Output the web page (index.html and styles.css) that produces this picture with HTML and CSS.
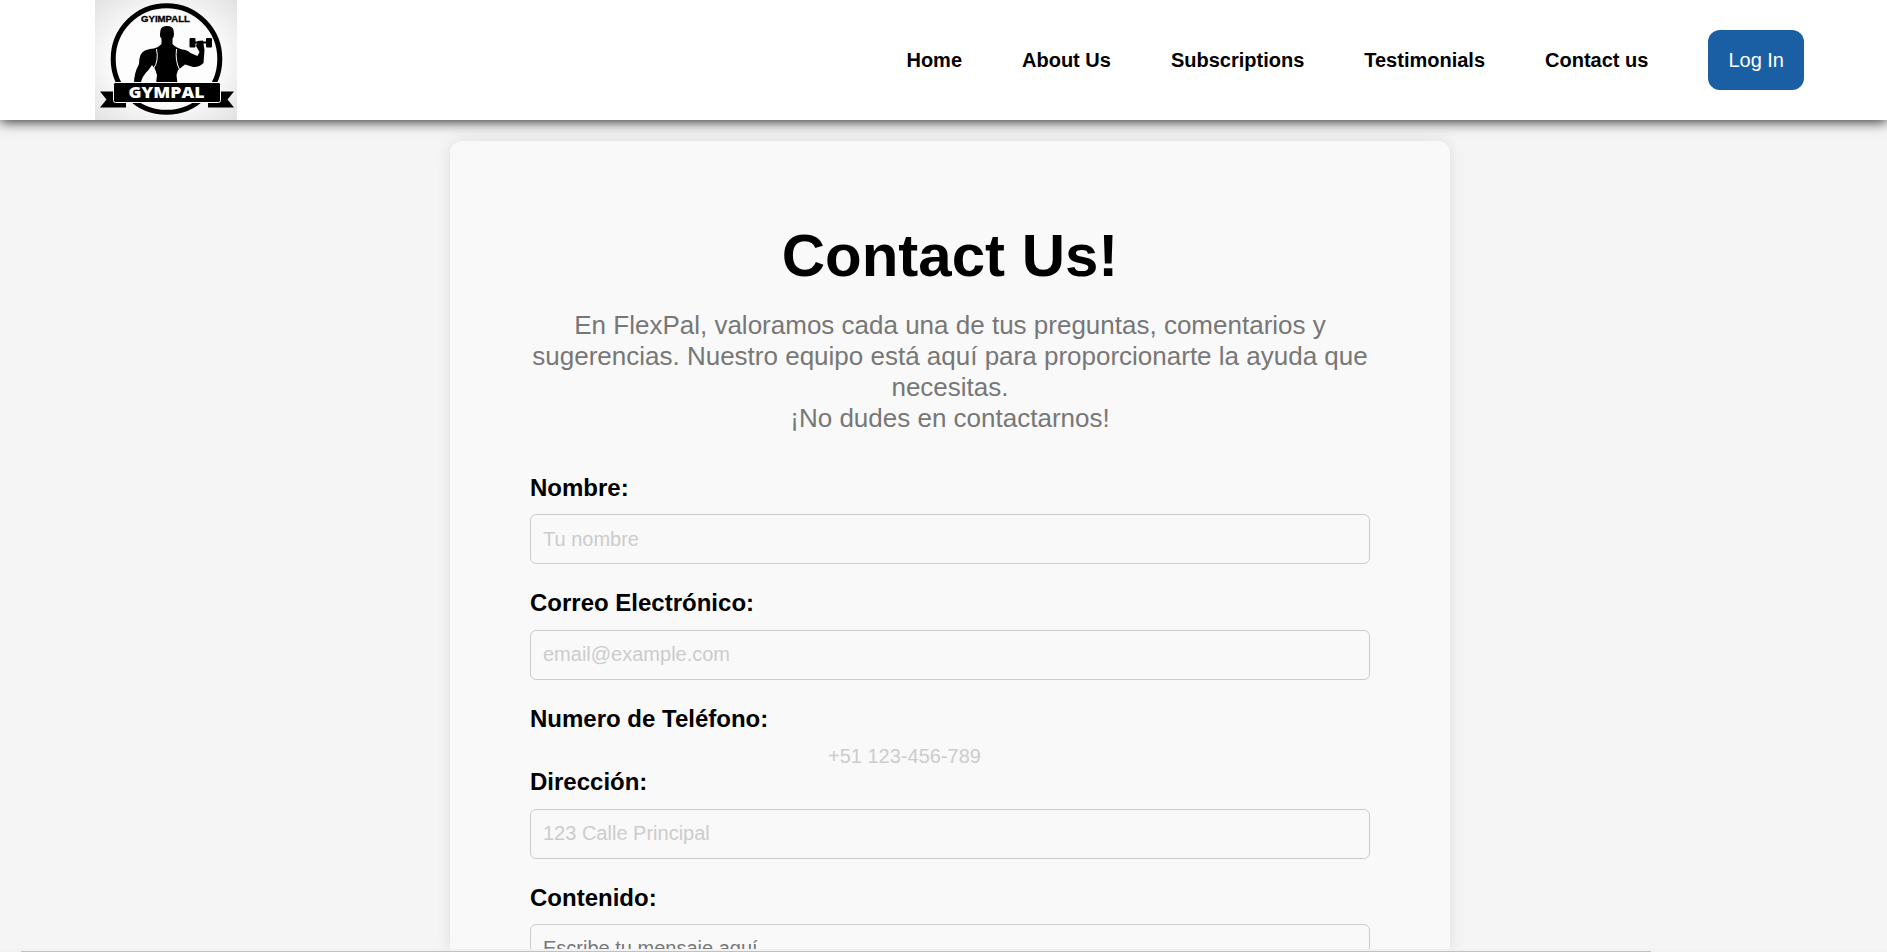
FILE: index.html
```html
<!DOCTYPE html>
<html lang="es">
<head>
<meta charset="utf-8">
<title>Contact Us</title>
<link rel="stylesheet" href="styles.css">
</head>
<body>
<header class="header">
  <svg class="logo" viewBox="0 0 142 120" role="img" aria-label="Gympal">
    <defs>
      <radialGradient id="paper" cx="50%" cy="50%" r="70%">
        <stop offset="0.5" stop-color="#fdfdfd"/>
        <stop offset="1" stop-color="#e2e2e2"/>
      </radialGradient>
    </defs>
    <rect width="142" height="120" fill="url(#paper)"/>
    <circle cx="71.5" cy="59" r="53.300" fill="none" stroke="#000" stroke-width="5"/>
    <text class="logo-arc" x="70.500" y="21.800" text-anchor="middle" textLength="49" lengthAdjust="spacingAndGlyphs">GYIMPALL</text>
    <path d="M66.500 44V38.500Q64.500 37 65 34L65.500 30Q66.500 26 72 26Q77.500 26 78.500 30L79 34Q79 37 77.500 38.500V44Q80 47 87 49.500Q92 49.500 95.500 53L102.500 56L104.500 52L101 46L102.500 41L108 40.500L109.500 50L108.500 63Q104 67.500 98 67L90 64.500L83 70L81.500 75L82.500 84H61L62 75L60 69L57 65L53.500 70Q47 76 45.500 84H39Q39 73 44 64Q44 53 50 50.500Q55 48.500 59 48.500Q64 47 66.500 44Z"/>
    <rect x="94.500" y="38" width="6" height="9.500" rx="1"/>
    <rect x="111" y="38" width="6" height="9.500" rx="1"/>
    <path d="M100 42.500H111" stroke="#000" stroke-width="2"/>
    <path d="M61.500 49Q64 61 58.500 68.500M81.500 49Q80 61 84.500 69.500" fill="none" stroke="#fff" stroke-width="1"/>
    <path d="M5 91.500H21V103H31V107.500H5L11.500 99.500ZM139 91.500H123V103H113V107.500H139L132.500 99.500Z"/>
    <rect x="18.500" y="82.500" width="107" height="20" rx="2" stroke="#fff"/>
    <text class="logo-name" x="71.500" y="97.800" text-anchor="middle" textLength="76" lengthAdjust="spacingAndGlyphs">GYMPAL</text>
  </svg>
  <nav class="nav">
    <a>Home</a>
    <a>About Us</a>
    <a>Subscriptions</a>
    <a>Testimonials</a>
    <a>Contact us</a>
    <a class="login">Log In</a>
  </nav>
</header>
<main class="card">
  <h1 class="title">Contact Us!</h1>
  <p class="intro">En FlexPal, valoramos cada una de tus preguntas, comentarios y sugerencias. Nuestro equipo está aquí para proporcionarte la ayuda que necesitas.<br>¡No dudes en contactarnos!</p>
  <form class="form">
    <label class="label" for="name">Nombre:</label>
    <input class="field" id="name" placeholder="Tu nombre">
    <label class="label label-next" for="mail">Correo Electrónico:</label>
    <input class="field field-raised" id="mail" placeholder="email@example.com">
    <label class="label label-next label-short" for="phone">Numero de Teléfono:</label>
    <input class="phone" id="phone" placeholder="+51 123-456-789">
    <label class="label label-next label-address" for="address">Dirección:</label>
    <input class="field field-raised" id="address" placeholder="123 Calle Principal">
    <label class="label label-next label-short" for="message">Contenido:</label>
    <textarea class="field message" id="message" placeholder="Escribe tu mensaje aquí"></textarea>
  </form>
</main>
<div class="scrollbar"><div class="thumb"></div></div>
</body>
</html>
```
FILE: styles.css
```css
* {
  box-sizing: border-box;
}

body {
  display: flex;
  flex-direction: column;
  margin: 0;
  height: 952px;
  overflow: hidden;
  background: #f5f5f5;
  font-family: "Liberation Sans", Arial, sans-serif;
}

.header {
  position: relative;
  z-index: 1;
  display: flex;
  flex: none;
  align-items: center;
  justify-content: space-between;
  height: 120px;
  padding: 0 83px 0 95px;
  background: #fff;
  box-shadow: 0 2px 12px rgba(0, 0, 0, 0.8);
}

.logo {
  display: block;
  width: 142px;
  height: 120px;
}

.logo-arc {
  font: 700 8.5px "Liberation Sans", Arial, sans-serif;
  stroke: #000;
  stroke-width: 0.3px;
}

.logo-name {
  font: 800 15.5px "Open Sans", sans-serif;
  fill: #fff;
}

.nav {
  display: flex;
  align-items: center;
  gap: 60px;
  font-size: 20px;
  font-weight: 700;
}

.nav .login {
  height: 60px;
  padding: 0 20px;
  border-radius: 12px;
  background: #1a5fa4;
  color: #fff;
  font-weight: 400;
  line-height: 60px;
}

.card {
  flex: 1;
  min-height: 0;
  width: 1000px;
  margin: 21px 0 0 450px;
  padding: 81px 80px 0;
  border-radius: 12px 12px 0 0;
  background: #f9f9f9;
  box-shadow: 0 0 15px rgba(0, 0, 0, 0.1);
  clip-path: inset(-20px -20px 0);
  overflow: hidden;
}

.title {
  margin: 0;
  font-size: 60px;
  line-height: 68px;
  text-align: center;
}

.intro {
  margin: 20px 0 38px;
  color: #777;
  font-size: 26px;
  line-height: 31px;
  text-align: center;
}

.form {
  display: flex;
  flex-direction: column;
}

.label {
  height: 42px;
  font-size: 24px;
  font-weight: 700;
  line-height: 31px;
}

.label-next {
  line-height: 29px;
}

.label-short {
  height: 41px;
}

.label-address {
  height: 41px;
  line-height: 27px;
}

.field {
  width: 840px;
  height: 50px;
  margin: 0 0 24px;
  padding: 12px;
  border: 1px solid #ccc;
  border-radius: 6px;
  background: transparent;
  font: 20px "Liberation Sans", Arial, sans-serif;
}

.field-raised {
  padding: 11px 12px 13px;
}

.field::placeholder,
.phone::placeholder {
  color: #ccc;
}

.message {
  height: 150px;
  resize: none;
}

.message::placeholder {
  color: #777;
}

.phone {
  align-self: center;
  width: 244px;
  height: 23px;
  padding: 0;
  border: 0;
  background: transparent;
  font: 20px "Liberation Sans", Arial, sans-serif;
}

.scrollbar {
  position: fixed;
  z-index: 2;
  bottom: 0;
  left: 0;
  width: 100%;
  height: 3px;
  padding: 2px 236px 0 21px;
  background: #f1f1f1;
}

.thumb {
  height: 1px;
  background: #c1c1c1;
}
```
